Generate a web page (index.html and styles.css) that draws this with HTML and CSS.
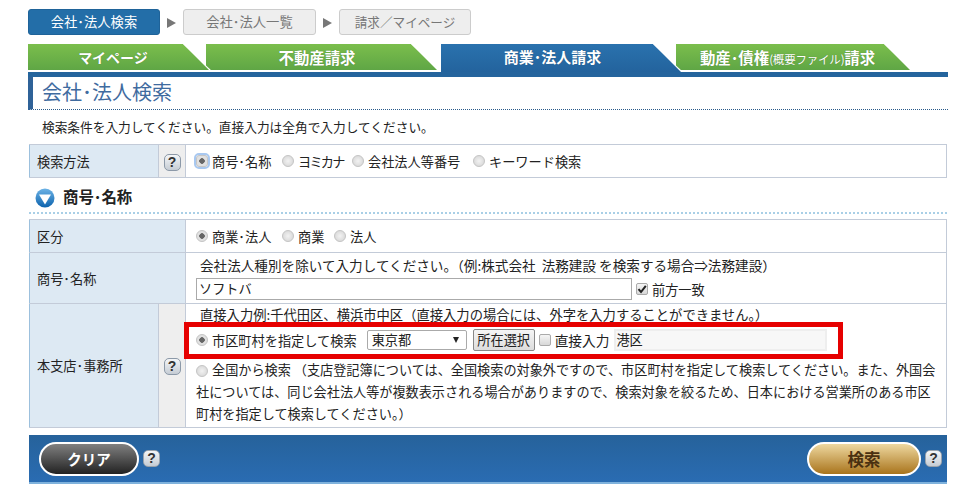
FILE: index.html
```html
<!DOCTYPE html>
<html lang="ja">
<head>
<meta charset="utf-8">
<title>会社・法人検索</title>
<link rel="stylesheet" href="styles.css">
</head>
<body>
<div class="page">
  <ol class="steps">
    <li class="step step-on">会社･法人検索</li>
    <li class="arrow"></li>
    <li class="step">会社･法人一覧</li>
    <li class="arrow"></li>
    <li class="step">請求／マイページ</li>
  </ol>
  <div class="tabs">
    <div class="tab t1"><span class="tabtext">マイページ</span></div>
    <div class="tab t2"><span class="tabtext">不動産請求</span></div>
    <div class="tab t3"><span class="tabtext">商業･法人請求</span></div>
    <div class="tab t4"><span class="tabtext">動産･債権<small>(概要ファイル)</small>請求</span></div>
  </div>
  <div class="rule"></div>
  <h1 class="title">会社･法人検索</h1>
  <p class="lead">検索条件を入力してください。直接入力は全角で入力してください。</p>
  <table class="form method">
    <colgroup><col class="col-lab"><col class="col-help"><col></colgroup>
    <tr>
      <th class="lab">検索方法</th>
      <td class="help"><span class="q">?</span></td>
      <td class="val"><span class="opts"><span class="r focus sel"></span><span class="w1">商号･名称</span><span class="r"></span><span class="w2"><span class="kana">ヨミカナ</span></span><span class="r"></span><span class="w3">会社法人等番号</span><span class="r"></span><span>キーワード検索</span></span></td>
    </tr>
  </table>
  <h2 class="sub"><svg class="ball" viewBox="0 0 20 20" width="20" height="20"><defs><linearGradient id="b" x1="0" y1="0" x2="0" y2="1"><stop offset="0" stop-color="#6db3e6"/><stop offset="1" stop-color="#0b62ad"/></linearGradient></defs><circle cx="10" cy="10" r="9.5" fill="url(#b)"/><path d="M4 6.5h12L10 16.5z" fill="#fff"/></svg><span class="subtext">商号･名称</span></h2>
  <table class="form detail">
    <colgroup><col class="col-lab"><col class="col-help"><col></colgroup>
    <tr class="h1">
      <th class="lab" colspan="2">区分</th>
      <td class="val"><span class="opts"><span class="r sel"></span><span class="w1">商業･法人</span><span class="r"></span><span class="w4">商業</span><span class="r"></span><span>法人</span></span></td>
    </tr>
    <tr class="h2">
      <th class="lab" colspan="2">商号･名称</th>
      <td class="val top">
        <div class="note note1">会社法人種別を除いて入力してください。（例:株式会社&nbsp; 法務建設 を検索する場合⇒法務建設）</div>
        <div class="nameline"><span class="textbox">ソフトバ</span><span class="c on"><svg viewBox="0 0 10 10" width="10" height="10"><path d="M1.5 5.2 4 8 8.8 1.8" fill="none" stroke="#222" stroke-width="2"/></svg></span><span>前方一致</span></div>
      </td>
    </tr>
    <tr class="h3">
      <th class="lab">本支店･事務所</th>
      <td class="help"><span class="q">?</span></td>
      <td class="val top">
        <div class="note note3">直接入力例:千代田区、横浜市中区（直接入力の場合には、外字を入力することができません。）</div>
        <div class="city">
          <span class="r sel"></span><span>市区町村を指定して検索</span>
          <span class="select">東京都<i></i></span>
          <span class="btn">所在選択</span>
          <span class="c"></span><span class="dlabel">直接入力</span>
          <span class="direct">港区</span>
        </div>
        <div class="all"><span class="r"></span>全国から検索 （支店登記簿については、全国検索の対象外ですので、市区町村を指定して検索してください。また、外国会<br>社については、同じ会社法人等が複数表示される場合がありますので、検索対象を絞るため、日本における営業所のある市区<br>町村を指定して検索してください。）</div>
      </td>
    </tr>
  </table>
  <div class="bar">
    <div class="group"><span class="pill dark">クリア</span><span class="q q2">?</span></div>
    <div class="group"><span class="pill gold">検索</span><span class="q q2">?</span></div>
  </div>
</div>
</body>
</html>
```

FILE: styles.css
```css
*, *::before, *::after { box-sizing: border-box; }
html, body { margin: 0; padding: 0; background: #fff; }
body { font-family: "Noto Sans CJK JP", "Liberation Sans", sans-serif; font-size: 13px; color: #222; height: 487px; overflow: hidden; }
.page { width: 920px; margin-left: 28px; padding-top: 9px; }

.steps { list-style: none; margin: 0; padding: 0; display: flex; align-items: center; height: 26px; }
.step { width: 133px; height: 26px; line-height: 24px; text-align: center; font-size: 13.3px; color: #777; background: #eee; border: 1px solid #ccc; border-radius: 3px; }
.step-on { background: #236ea8; border-color: #1f6399; color: #fff; width: 132px; }
.arrow { width: 0; height: 0; border-left: 9px solid #777; border-top: 5.5px solid transparent; border-bottom: 5.5px solid transparent; margin: 2px 7px 0 7px; }
.step:last-child { width: 132px; font-size: 12.6px; }

.tabs { display: flex; height: 28px; margin-top: 9px; }
.tab { position: relative; height: 28px; background: #fff; clip-path: polygon(0 0, calc(100% - 30px) 0, 100% 100%, 0 100%); }
.tab::before { content: ""; position: absolute; left: 0; top: 0; right: 0; height: 26px; background: linear-gradient(#7bbe4c, #5fa645); clip-path: polygon(0 0, calc(100% - 30px) 0, calc(100% - 4px) 100%, 0 100%); }
.tabtext { position: relative; display: block; height: 26px; line-height: 26px; text-align: center; font-weight: 700; font-size: 15.4px; color: #fff; white-space: nowrap; text-shadow: 0 0 1px rgba(0,0,0,.3); }
.t1 { width: 185px; padding-right: 15px; z-index: 2; }
.t1 .tabtext { font-size: 14px; }
.t2 { width: 235px; margin-left: -7px; padding-right: 13px; z-index: 1; }
.t3 { width: 242px; padding-right: 19px; z-index: 2; }
.t3::before { height: 28px; background: linear-gradient(#2a72ae, #23639d); clip-path: polygon(0 0, calc(100% - 30px) 0, calc(100% - 2px) 100%, 0 100%); }
.t3 .tabtext { font-size: 15px; }
.t4 { width: 238px; margin-left: -7px; padding-right: 15px; z-index: 1; }
.t4 small { font-size: 11.5px; font-weight: 400; letter-spacing: -.2px; }
.rule { height: 5px; background: #24649d; }
.title { margin: 0; height: 33px; border-left: 5px solid #2f6298; border-bottom: 1px dotted #2a5a8a; color: #3f6b9f; font-size: 20px; font-weight: 400; line-height: 30px; padding-left: 9px; }
.lead { margin: 0; height: 34px; line-height: 34px; padding-left: 14px; font-size: 12.7px; }

.form { border-collapse: collapse; width: 918px; margin-left: 1px; table-layout: fixed; font-size: 13.2px; }
.col-lab { width: 129px; }
.col-help { width: 27px; }
.form th, .form td { border: 1px solid #c3cbd8; padding: 0; font-weight: 400; }
.lab { background: #dde9f3; text-align: left; padding-left: 7px !important; border-left-color: #9cc0dd !important; }
.help { background: #eee; text-align: center; }
.val { background: #fff; padding-left: 10px !important; }
.top { vertical-align: top; }
.method tr { height: 33px; }
.q { display: inline-block; width: 17px; height: 17px; line-height: 15px; border: 1px solid #8c99a8; border-radius: 5px; background: linear-gradient(#f4f6f8, #c5ccd4); color: #333; font-size: 14px; font-weight: 700; text-align: center; font-family: "Liberation Sans", sans-serif; vertical-align: middle; }
.q2 { border-color: #9aa3ad; margin-left: 4px; display: block; }

.opts { display: flex; align-items: center; white-space: nowrap; }
.r { flex: none; display: inline-block; width: 12px; height: 12px; border-radius: 50%; border: 1px solid #c5c5c5; background: radial-gradient(circle at 50% 50%, #f2f2f2, #d2d2d2); margin-right: 4px; }
.r.sel { background: radial-gradient(circle at 50% 50%, #666 0 2.5px, #e2e2e2 3px, #ddd); }
.r.focus { outline: 2px solid #a8c8f0; border-radius: 3px; }
.w1 { width: 70px; }
.w2 { width: 54px; }
.w3 { width: 105px; }
.w4 { width: 36px; }
.kana { letter-spacing: -1.8px; }
.c { flex: none; display: inline-block; width: 12px; height: 12px; border: 1px solid #aaa; border-radius: 2px; background: linear-gradient(#f5f5f5, #d8d8d8); margin-right: 4px; }
.c svg { display: block; margin: 0 auto; }

.sub { margin: 0 0 0 1px; height: 36px; font-size: 15.4px; font-weight: 700; padding: 10px 0 0 6px; display: flex; align-items: flex-start; gap: 8px; color: #222; border-bottom: 2px dotted #a9cfe6; width: 918px; }
.subtext { line-height: 17px; }
.ball { flex: none; }
.detail { margin-top: 5px; }
.h1 { height: 33px; }
.h2 { height: 51px; }
.h3 { height: 124px; }
.note { height: 25px; line-height: 25px; padding-left: 4px; white-space: nowrap; }
.note1 { font-size: 13.6px; }
.nameline { display: flex; align-items: center; height: 22px; white-space: nowrap; }
.textbox { width: 436px; height: 22px; border: 1px solid #aaa; line-height: 20px; padding-left: 2px; margin-right: 4px; }
.note3 { height: 20px; line-height: 22px; font-size: 13.3px; }
.city { height: 35px; padding-bottom: 3px; display: flex; align-items: center; white-space: nowrap; position: relative; }
.city::after { content: ""; position: absolute; left: -12px; top: -2px; width: 659px; height: 37px; border: 5px solid #e60000; pointer-events: none; }
.select { width: 100px; height: 20px; margin-left: 10px; border: 1px solid #aaa; border-radius: 2px; line-height: 18px; padding-left: 4px; position: relative; }
.select i { position: absolute; right: 7px; top: 6px; border-left: 3.5px solid transparent; border-right: 3.5px solid transparent; border-top: 6px solid #222; }
.btn { width: 62px; height: 22px; margin: 0 4px 0 6px; border: 1px solid #888; border-radius: 2px; background: linear-gradient(#f5f5f5, #ddd); line-height: 20px; text-align: center; }
.dlabel { font-size: 13.7px; }
.direct { width: 213px; height: 22px; margin-left: 5px; background: #f7f7f7; border: 2px solid #eee; line-height: 18px; }
.all { line-height: 22px; white-space: nowrap; font-size: 13.15px; }
.all .r { vertical-align: -2px; }
.bar { margin: 7px 0 0 1px; width: 918px; height: 49px; background: linear-gradient(#26629b, #2a6cb2); border-bottom: 2px solid #7fb2dc; display: flex; justify-content: space-between; align-items: center; padding: 0 5px 0 10px; }
.group { display: flex; align-items: center; }
.pill { display: block; height: 34px; line-height: 30px; border: 2px solid #fff; border-radius: 17px; text-align: center; }
.dark { width: 100px; background: linear-gradient(#808080, #222); color: #fff; font-weight: 700; font-size: 14.5px; }
.gold { width: 114px; background: linear-gradient(#eed8a0, #a9741c); color: #4a3010; font-weight: 700; font-size: 16.5px; }
```
